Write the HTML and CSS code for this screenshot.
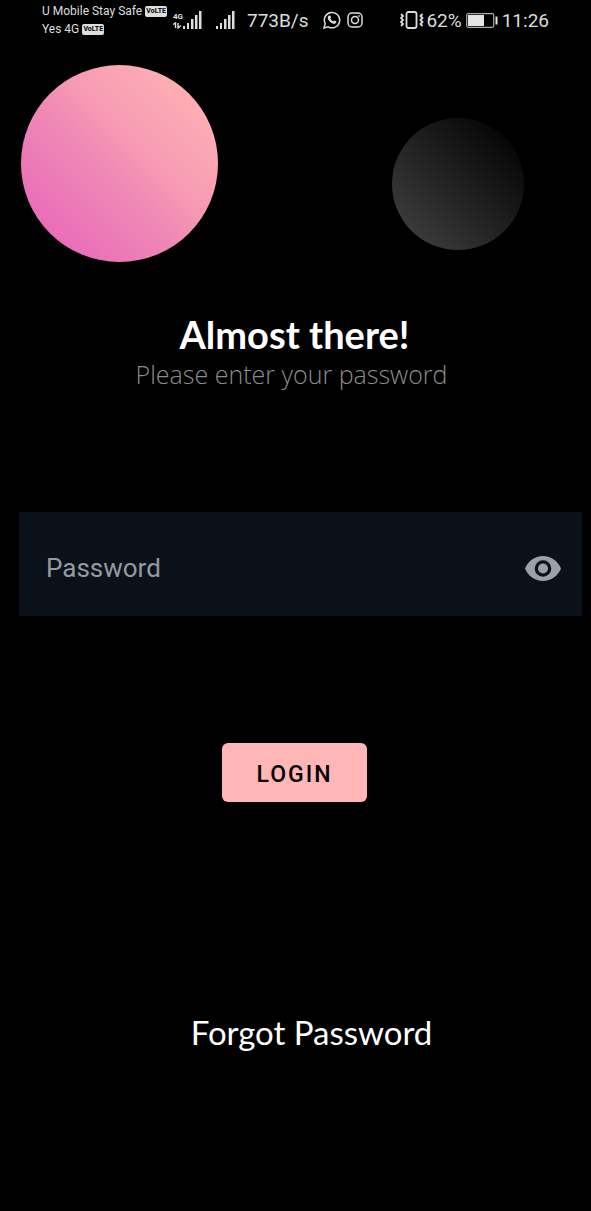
FILE: index.html
```html
<!DOCTYPE html>
<html lang="en">
<head>
<meta charset="utf-8">
<meta name="viewport" content="width=device-width, initial-scale=1">
<title>Login</title>
<link rel="stylesheet" href="styles.css">
</head>
<body>
<header class="status">
  <div class="carriers">
    <div class="carrier">U Mobile Stay Safe <span class="volte">VoLTE</span></div>
    <div class="carrier">Yes 4G <span class="volte">VoLTE</span></div>
  </div>
  <div class="network">
    <div class="cell"><span>4G</span>
      <svg width="10" height="7" viewBox="0 0 10 7" fill="none" stroke="#ddd" stroke-width="1.4"><path d="M0 2.5 2.5 1V6M5 1v5l3-2.5"/></svg>
    </div>
    <svg class="bars" width="19" height="18" viewBox="0 0 19 18" fill="#ddd"><path d="M0 15h2v3H0zM4 12h2v6H4zM8 8h2.500v10H8zM12 4h2.500v14H12zM16 0h2.500v18H16z"/></svg>
  </div>
  <svg class="bars second" width="19" height="18" viewBox="0 0 19 18" fill="#ddd"><path d="M0 15h2v3H0zM4 12h2v6H4zM8 8h2.500v10H8zM12 4h2.500v14H12zM16 0h2.500v18H16z"/></svg>
  <span class="speed">773B/s</span>
  <svg class="chat" width="18" height="18" viewBox="0 0 18 18" fill="none" stroke="#ddd" stroke-width="1.500"><path d="M1 17 2.200 12.700A7.700 7.700 0 1 1 5.200 15.800Z"/><path fill="#ddd" stroke="none" d="M6.300 4.500c.6-.2 1 0 1.200.5l.5 1.300c.1.500-.7 1-.7 1.300.5 1.200 1.600 2.200 2.800 2.700.4 0 .9-1 1.300-.9l1.600.8c.8.4 0 1.900-.7 2.300-1.400.8-3.600-.2-5.100-1.600C5.500 9.300 4.300 7.500 4.900 5.900c.2-.6.7-1.200 1.400-1.400z"/></svg>
  <svg class="camera" width="16" height="16" viewBox="0 0 16 16" fill="none" stroke="#ddd" stroke-width="1.500"><rect x="1" y="1" width="14" height="14" rx="4"/><circle cx="8" cy="8" r="3.500"/><circle cx="12" cy="4" r=".6" fill="#ddd" stroke-width=".6"/></svg>
  <div class="right">
    <svg width="24" height="18" viewBox="0 0 24 18" fill="none" stroke="#ddd"><rect x="6.500" y="1" width="10" height="16" rx="2" stroke-width="1.800"/><path stroke-width="1.800" d="M1 3l2 2-2 2 2 2-2 2 2 2-2 2M22.500 3l-2 2 2 2-2 2 2 2-2 2 2 2"/></svg>
    <span class="percent">62%</span>
    <svg class="battery" width="32" height="17" viewBox="0 0 32 17"><rect x=".7" y="1.700" width="27" height="13.600" rx="1.500" fill="none" stroke="#aaa" stroke-width="1.200"/><path fill="#e4e4e4" d="M2 3h16v11H2zM29.500 4.500h2v8h-2z"/></svg>
    <time>11:26</time>
  </div>
</header>
<main>
  <div class="orbs"><div class="orb pink"></div><div class="orb dark"></div></div>
  <h1>Almost there!</h1>
  <p class="lead">Please enter your password</p>
  <form>
    <div class="field">
      <input type="password" placeholder="Password" aria-label="Password">
      <button class="reveal" type="button" aria-label="Show password">
        <svg width="36" height="25" viewBox="0 0 36 25"><path fill="#9da1a7" fill-rule="evenodd" d="M18 0C10 0 3 5 0 12.500 3 20 10 25 18 25s15-5 18-12.500C33 5 26 0 18 0Zm0 4.200a8.300 8.300 0 1 1 0 16.600 8.300 8.300 0 0 1 0-16.600Z"/><circle cx="18" cy="12.500" r="5" fill="#9da1a7"/></svg>
      </button>
    </div>
    <button class="login" type="submit">LOGIN</button>
  </form>
  <a class="forgot" href="#forgot">Forgot Password</a>
</main>
</body>
</html>
```
FILE: styles.css
```css
* { box-sizing: border-box; }
body { margin: 0; background: #000; color: #fff; font-family: Roboto, sans-serif; }
svg { display: block; flex: none; }
.status { display: flex; align-items: center; height: 40px; padding: 0 42px; color: #ddd; font-size: 19px; white-space: nowrap; }
.carriers { width: 131px; font-size: 12px; line-height: 18px; align-self: flex-start; padding-top: 2px; }
.carrier { display: flex; align-items: center; gap: 3px; }
.volte { border-radius: 2px; background: #ddd; color: #000; font: 700 7px/11px Roboto, sans-serif; width: 22px; display: flex; justify-content: center; }
.network { display: flex; align-items: center; }
.cell { width: 10px; font-size: 8px; font-weight: 700; line-height: 10px; }
.second { margin-left: 14px; }
.speed { margin-left: 12px; }
.chat { margin-left: 14px; }
.camera { margin-left: 6px; }
.right { display: flex; align-items: center; margin-left: auto; }
.percent { margin-left: 2px; }
.battery { margin: 0 4px; }
main { display: flex; flex-direction: column; }
.orbs { display: flex; justify-content: space-between; align-items: center; padding: 25px 67px 0 21px; }
.orb { border-radius: 50%; aspect-ratio: 1; }
.pink { width: 197px; background: linear-gradient(45deg, #e96bb9 12%, #ef86b7 42%, #f79bb3 60%, #ffb3b4 92%); }
.dark { width: 132px; margin-top: 40px; background: linear-gradient(45deg, #444, #000 95%); }
h1 { margin: 50px 0 0; padding-right: 2px; text-align: center; font: 700 38px/44px Lato, sans-serif; }
.lead { margin: 2px 0 0; padding-right: 8px; text-align: center; color: #8c8c8c; font: 300 25px/32px "Open Sans", sans-serif; }
form { display: flex; flex-direction: column; margin-top: 122px; padding: 0 9px 0 19px; }
.field { display: flex; align-items: center; height: 104px; padding: 8px 21px 0 27px; background: #0a1119; }
input { flex: 1; min-width: 0; border: 0; padding: 0; outline: 0; background: none; color: #fff; font: 26px/36px Roboto, sans-serif; }
input::placeholder { color: #9699a1; opacity: 1; }
button { border: 0; cursor: pointer; }
.reveal { padding: 0; background: none; }
.login { align-self: center; margin: 127px 12px 0 0; padding: 4px 0 0; width: 145px; height: 59px; border-radius: 6px; background: #ffb6b6; color: #000; font: 500 23px/28px Roboto, sans-serif; letter-spacing: 2px; }
.forgot { align-self: center; margin: 208px 0 0 32px; color: #fff; text-decoration: none; font: 33px/44px Lato, sans-serif; }
```
